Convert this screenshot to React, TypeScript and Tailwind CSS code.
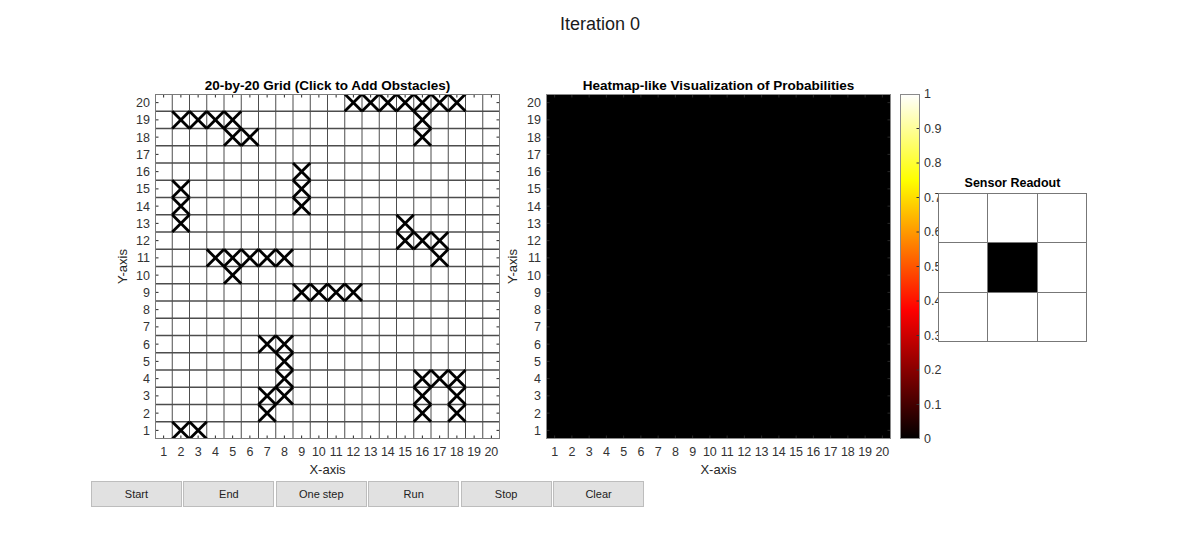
import React from "react";

const S = 345 / 20;
const N = 20;
const nums = Array.from({ length: N }, (_, i) => i + 1);

const obstacles: [number, number][] = [
  ...[12, 13, 14, 15, 16, 17, 18].map((c) => [c, 20] as [number, number]),
  ...[2, 3, 4, 5, 16].map((c) => [c, 19] as [number, number]),
  ...[5, 6, 16].map((c) => [c, 18] as [number, number]),
  [9, 16],
  [2, 15], [9, 15],
  [2, 14], [9, 14],
  [2, 13], [15, 13],
  [15, 12], [16, 12], [17, 12],
  ...[4, 5, 6, 7, 8, 17].map((c) => [c, 11] as [number, number]),
  [5, 10],
  ...[9, 10, 11, 12].map((c) => [c, 9] as [number, number]),
  [7, 6], [8, 6],
  [8, 5],
  [8, 4], [16, 4], [17, 4], [18, 4],
  [7, 3], [8, 3], [16, 3], [18, 3],
  [7, 2], [16, 2], [18, 2],
  [2, 1], [3, 1],
];

function Ticks({ color }: { color: string }) {
  return (
    <g stroke={color} strokeWidth={1}>
      {nums.map((k) => {
        const p = (k - 0.5) * S;
        return (
          <g key={k}>
            <line x1={0} y1={p} x2={3.5} y2={p} />
            <line x1={345 - 3.5} y1={p} x2={345} y2={p} />
            <line x1={p} y1={0} x2={p} y2={3.5} />
            <line x1={p} y1={345 - 3.5} x2={p} y2={345} />
          </g>
        );
      })}
    </g>
  );
}

function GridPlot() {
  return (
    <svg width={345} height={345} className="block">
      <rect x={0} y={0} width={345} height={345} fill="#fff" />
      <g stroke="#4d4d4d" strokeWidth={1}>
        {Array.from({ length: 19 }, (_, i) => (i + 1) * S).map((p, i) => (
          <g key={i}>
            <line x1={p} y1={0} x2={p} y2={345} />
            <line x1={0} y1={p} x2={345} y2={p} strokeWidth={1.3} />
          </g>
        ))}
      </g>
      <Ticks color="#262626" />
      <g stroke="#000" strokeWidth={2.8} strokeLinecap="butt">
        {obstacles.map(([c, r], i) => {
          const cx = (c - 0.5) * S;
          const cy = (N - r + 0.5) * S;
          const h = S / 2;
          return (
            <g key={i}>
              <line x1={cx - h} y1={cy - h} x2={cx + h} y2={cy + h} />
              <line x1={cx - h} y1={cy + h} x2={cx + h} y2={cy - h} />
            </g>
          );
        })}
      </g>
      <rect x={0.5} y={0.5} width={344} height={344} fill="none" stroke="#7a7a7a" strokeWidth={1} />
    </svg>
  );
}

function HeatPlot() {
  return (
    <svg width={345} height={345} className="block">
      <rect x={0} y={0} width={345} height={345} fill="#000" />
      <Ticks color="#2a2a2a" />
      <rect x={0.5} y={0.5} width={344} height={344} fill="none" stroke="#8a8a8a" strokeWidth={1} />
    </svg>
  );
}

function Axes({
  title,
  wide,
  children,
}: {
  title: string;
  wide: boolean;
  children: React.ReactNode;
}) {
  const spacer = wide ? "w-[41px]" : "w-[40px]";
  return (
    <div className="flex flex-col">
      <div className="flex h-[17px]">
        <div className={spacer} />
        <div className="w-[345px] text-center whitespace-nowrap text-[13.5px] font-bold leading-[17px] text-[#000]">
          {title}
        </div>
      </div>
      <div className="flex h-[345px]">
        <div className="w-[16px] flex items-center justify-center">
          <span className="[writing-mode:vertical-rl] rotate-180 text-[13px] leading-[16px] text-[#262626] whitespace-nowrap">
            Y-axis
          </span>
        </div>
        <div
          className={`${wide ? "w-[25px]" : "w-[24px]"} flex flex-col pt-[1px] pr-[5px] text-right text-[12.5px] text-[#333]`}
        >
          {[...nums].reverse().map((n) => (
            <div key={n} className="h-[17.25px] leading-[17.25px]">
              {n}
            </div>
          ))}
        </div>
        {children}
      </div>
      <div className="flex h-[21px] pt-[5px]">
        <div className={spacer} />
        <div className="flex text-[12.5px] leading-[16px] text-[#333]">
          {nums.map((n) => (
            <div key={n} className="w-[17.25px] text-center whitespace-nowrap">
              {n}
            </div>
          ))}
        </div>
      </div>
      <div className="flex mt-[2px] h-[16px]">
        <div className={spacer} />
        <div className="w-[345px] text-center text-[13px] leading-[16px] text-[#262626]">X-axis</div>
      </div>
    </div>
  );
}

function Colorbar() {
  const labels = ["1", "0.9", "0.8", "0.7", "0.6", "0.5", "0.4", "0.3", "0.2", "0.1", "0"];
  return (
    <div className="flex">
      <div className="mt-[17px]">
        <svg width={20} height={345} className="block">
          <defs>
            <linearGradient id="hot" x1="0" y1="1" x2="0" y2="0">
              <stop offset="0" stopColor="#000" />
              <stop offset="0.375" stopColor="#ff0000" />
              <stop offset="0.75" stopColor="#ffff00" />
              <stop offset="1" stopColor="#ffffff" />
            </linearGradient>
          </defs>
          <rect x={0} y={0} width={20} height={345} fill="url(#hot)" />
          <g stroke="#333" strokeWidth={1}>
            {labels.map((_, i) => {
              const y = i * 34.5;
              return <line key={i} x1={16.5} y1={y} x2={20} y2={y} />;
            })}
          </g>
          <rect x={0.5} y={0.5} width={19} height={344} fill="none" stroke="#8a8a8a" strokeWidth={1} />
        </svg>
      </div>
      <div className="mt-[9px] h-[361px] flex flex-col justify-between pl-[4px] text-[12.5px] leading-[16px] text-[#333]">
        {labels.map((l) => (
          <div key={l} className="h-[16px]">
            {l}
          </div>
        ))}
      </div>
    </div>
  );
}

function Sensor() {
  const cells = [0, 0, 0, 0, 1, 0, 0, 0, 0];
  return (
    <div className="absolute left-[938px] top-[175px] flex flex-col w-[149px]">
      <div className="h-[17px] text-center text-[12.5px] font-bold leading-[17px] text-black whitespace-nowrap">
        Sensor Readout
      </div>
      <div className="mt-[1px] grid grid-cols-3 grid-rows-3 gap-px bg-[#777] p-px w-[149px] h-[149px]">
        {cells.map((v, i) => (
          <div key={i} className={v ? "bg-black" : "bg-white"} />
        ))}
      </div>
    </div>
  );
}

export default function App() {
  const btns = ["Start", "End", "One step", "Run", "Stop", "Clear"];
  return (
    <div className="relative w-[1200px] h-[554px] bg-white overflow-hidden font-['Liberation_Sans',Arial,sans-serif]">
      <div className="h-[77px] pt-[14px] text-center text-[18px] leading-[20px] text-[#1a1a1a]">
        Iteration 0
      </div>
      <div className="flex pl-[115px]">
        <Axes title="20-by-20 Grid (Click to Add Obstacles)" wide={false}>
          <GridPlot />
        </Axes>
        <div className="w-[5px]" />
        <Axes title="Heatmap-like Visualization of Probabilities" wide={true}>
          <HeatPlot />
        </Axes>
        <div className="w-[9px]" />
        <Colorbar />
      </div>
      <div className="mt-[3px] ml-[91px] w-[553px] h-[26px] grid grid-cols-6 gap-[1.5px]">
        {btns.map((b) => (
          <div
            key={b}
            className="flex items-center justify-center bg-[#e1e1e1] border border-[#bdbdbd] text-[11px] text-[#222]"
          >
            {b}
          </div>
        ))}
      </div>
      <Sensor />
    </div>
  );
}
